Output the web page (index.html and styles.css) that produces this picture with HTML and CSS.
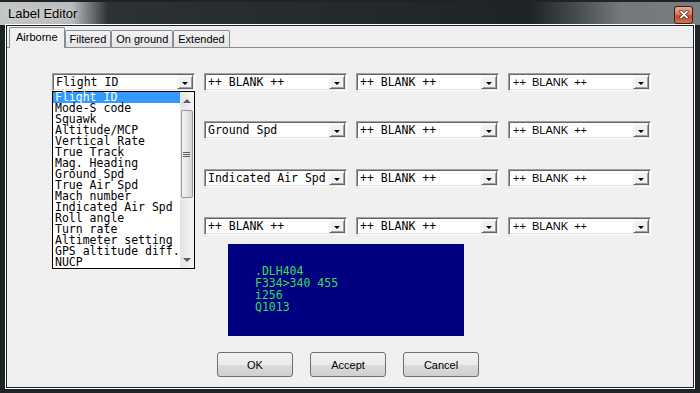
FILE: index.html
```html
<!DOCTYPE html>
<html lang="en">
<head>
    <meta charset="UTF-8">
    <title>Label Editor</title>
    <link rel="stylesheet" href="styles.css">
</head>
<body>
    <div class="window">
        <div class="titlebar">
            <span class="title">Label Editor</span>
            <span class="close-btn">
                <svg width="10" height="9" viewBox="0 0 10 9">
                    <path d="M2 1.5 L8 7.5 M8 1.5 L2 7.5" stroke="#5a1c10" stroke-width="3.2" stroke-linecap="round"/>
                    <path d="M2 1.5 L8 7.5 M8 1.5 L2 7.5" stroke="#fff" stroke-width="1.8" stroke-linecap="round"/>
                </svg>
            </span>
        </div>

        <div class="frame">
            <div class="client">
                <div class="tabs">
                    <div class="tab active">Airborne</div>
                    <div class="tab">Filtered</div>
                    <div class="tab">On ground</div>
                    <div class="tab">Extended</div>
                </div>

                <div class="panel">
                    <div class="grid">
                        <!-- row 1 -->
                        <div class="combo">
                            <span class="combo-value">Flight ID</span>
                            <span class="combo-btn"></span>
                            <div class="dropdown">
                                <div class="options">
                                    <div class="option selected">Flight ID</div>
                                    <div class="option">Mode-S code</div>
                                    <div class="option">Squawk</div>
                                    <div class="option">Altitude/MCP</div>
                                    <div class="option">Vertical Rate</div>
                                    <div class="option">True Track</div>
                                    <div class="option">Mag. Heading</div>
                                    <div class="option">Ground Spd</div>
                                    <div class="option">True Air Spd</div>
                                    <div class="option">Mach number</div>
                                    <div class="option">Indicated Air Spd</div>
                                    <div class="option">Roll angle</div>
                                    <div class="option">Turn rate</div>
                                    <div class="option">Altimeter setting</div>
                                    <div class="option">GPS altitude diff.</div>
                                    <div class="option">NUCP</div>
                                </div>
                                <div class="scrollbar">
                                    <div class="sb-arrow up"></div>
                                    <div class="sb-track">
                                        <div class="sb-thumb"><span class="sb-grip"></span></div>
                                    </div>
                                    <div class="sb-arrow down"></div>
                                </div>
                            </div>
                        </div>
                        <div class="combo"><span class="combo-value">++ BLANK ++</span><span class="combo-btn"></span></div>
                        <div class="combo"><span class="combo-value">++ BLANK ++</span><span class="combo-btn"></span></div>
                        <div class="combo"><span class="combo-value sans">++  BLANK  ++</span><span class="combo-btn"></span></div>

                        <!-- row 2 (first box sits under the open list) -->
                        <div class="combo"><span class="combo-value"></span><span class="combo-btn"></span></div>
                        <div class="combo"><span class="combo-value">Ground Spd</span><span class="combo-btn"></span></div>
                        <div class="combo"><span class="combo-value">++ BLANK ++</span><span class="combo-btn"></span></div>
                        <div class="combo"><span class="combo-value sans">++  BLANK  ++</span><span class="combo-btn"></span></div>

                        <!-- row 3 -->
                        <div class="combo"><span class="combo-value"></span><span class="combo-btn"></span></div>
                        <div class="combo"><span class="combo-value">Indicated Air Spd</span><span class="combo-btn"></span></div>
                        <div class="combo"><span class="combo-value">++ BLANK ++</span><span class="combo-btn"></span></div>
                        <div class="combo"><span class="combo-value sans">++  BLANK  ++</span><span class="combo-btn"></span></div>

                        <!-- row 4 -->
                        <div class="combo"><span class="combo-value"></span><span class="combo-btn"></span></div>
                        <div class="combo"><span class="combo-value">++ BLANK ++</span><span class="combo-btn"></span></div>
                        <div class="combo"><span class="combo-value">++ BLANK ++</span><span class="combo-btn"></span></div>
                        <div class="combo"><span class="combo-value sans">++  BLANK  ++</span><span class="combo-btn"></span></div>
                    </div>

                    <div class="preview">.DLH404
F334>340 455
i256
Q1013</div>

                    <div class="actions">
                        <button class="btn">OK</button>
                        <button class="btn">Accept</button>
                        <button class="btn">Cancel</button>
                    </div>
                </div>
            </div>
        </div>
    </div>
</body>
</html>
```

FILE: styles.css
```css
* {
    box-sizing: border-box;
}
body {
    margin: 0;
    width: 700px;
    height: 393px;
    overflow: hidden;
    font-family: "Liberation Sans", Arial, sans-serif;
    font-size: 11px;
    color: #000;
    background: #1e2326;
}
.window {
    height: 393px;
    display: flex;
    flex-direction: column;
    background: #1e2326;
}
.titlebar {
    flex: none;
    height: 25px;
    display: flex;
    align-items: center;
    justify-content: space-between;
    padding: 0 7px 0 8px;
    border-top: 2px solid #1e2326;
    background: linear-gradient(to right, #c3c5c6 0, #b9bbbc 72px, #2c3134 108px, #1e2326 530px, #4a4f52 580px, #74787a 620px, #7a7d7f 700px);
}
.title {
    font-size: 13px;
    color: #000;
    text-shadow: 0 0 5px #e4e4e4;
}
.close-btn {
    width: 19px;
    height: 18px;
    margin-top: 2px;
    display: flex;
    align-items: center;
    justify-content: center;
    border: 1px solid #3a1e17;
    border-radius: 3px;
    background: linear-gradient(#eaa996, #d77a62 45%, #c34a2f 55%, #d2714f);
}
.frame {
    flex: 1;
    display: flex;
    padding: 0 6px 5px 6px;
}
.client {
    flex: 1;
    display: flex;
    flex-direction: column;
    background: #f0f0f0;
    border: 1px solid #1e2326;
    box-shadow: 0 0 0 1px #fff;
}

/* tabs */
.tabs {
    flex: none;
    height: 21px;
    display: flex;
    align-items: flex-end;
    padding-left: 2px;
}
.tab {
    height: 17px;
    padding: 0 4px;
    line-height: 17px;
    border: 1px solid #898c95;
    border-bottom: none;
    border-radius: 2px 2px 0 0;
    background: linear-gradient(#f3f3f3, #e4e4e4);
}
.tab.active {
    position: relative;
    height: 21px;
    padding: 0 6px;
    line-height: 19px;
    margin-bottom: -1px;
    background: #f0f0f0;
}
.panel {
    flex: 1;
    border-top: 1px solid #898c95;
    padding-top: 25px;
}

/* combo boxes */
.grid {
    display: grid;
    grid-template-columns: repeat(4, 143px);
    grid-auto-rows: 18px;
    column-gap: 9px;
    row-gap: 30px;
    margin-left: 45px;
}
.combo {
    position: relative;
    display: flex;
    align-items: center;
    height: 18px;
    padding: 1px;
    background: #fff;
    border: 1px solid;
    border-color: #a0a0a0 #fff #fff #a0a0a0;
    box-shadow: inset 1px 1px 0 #696969, inset -1px -1px 0 #e3e3e3;
}
.combo-value {
    flex: 1;
    padding-left: 2px;
    font-family: "DejaVu Sans Mono", monospace;
    font-size: 11.5px;
    white-space: pre;
    overflow: hidden;
}
.combo-value.sans {
    font-family: "Liberation Sans", Arial, sans-serif;
    font-size: 11px;
    padding-left: 3px;
}
.combo-btn {
    width: 16px;
    height: 14px;
    display: flex;
    align-items: center;
    justify-content: center;
    padding-top: 3px;
    background: #f0f0f0;
    border: 1px solid;
    border-color: #f0f0f0 #696969 #696969 #f0f0f0;
    box-shadow: inset 1px 1px 0 #fff, inset -1px -1px 0 #a0a0a0;
}
.combo-btn::after {
    content: "";
    border-left: 3px solid transparent;
    border-right: 3px solid transparent;
    border-top: 3px solid #000;
}

/* open list */
.dropdown {
    position: absolute;
    top: 17px;
    left: -1px;
    z-index: 2;
    width: 143px;
    height: 178px;
    display: flex;
    background: #fff;
    border: 1px solid #000;
}
.options {
    flex: 1;
    font-family: "DejaVu Sans Mono", monospace;
    font-size: 11.5px;
    line-height: 11px;
}
.option {
    height: 11px;
    padding-left: 2px;
    white-space: nowrap;
}
.option.selected {
    background: #3399ff;
    color: #fff;
}
.scrollbar {
    width: 17px;
    display: flex;
    flex-direction: column;
    background: linear-gradient(to right, #e4e4e4, #f4f4f4);
}
.sb-arrow {
    height: 17px;
    display: flex;
    align-items: center;
    justify-content: center;
}
.sb-arrow.up::before {
    content: "";
    border-left: 4px solid transparent;
    border-right: 4px solid transparent;
    border-bottom: 4px solid #5c5c5c;
}
.sb-arrow.down::before {
    content: "";
    border-left: 4px solid transparent;
    border-right: 4px solid transparent;
    border-top: 4px solid #5c5c5c;
}
.sb-track {
    flex: 1;
    padding: 1px 1px 0 1px;
}
.sb-thumb {
    height: 88px;
    display: flex;
    align-items: center;
    justify-content: center;
    border: 1px solid #979797;
    border-radius: 2px;
    background: linear-gradient(to right, #f4f4f4, #e6e6e6 50%, #d4d4d4);
}
.sb-grip {
    width: 7px;
    height: 5px;
    background: repeating-linear-gradient(#606060 0 1px, transparent 1px 2px);
}

/* preview */
.preview {
    width: 236px;
    height: 92px;
    margin: 9px 0 0 221px;
    padding: 21px 0 0 27px;
    background: #000080;
    color: #33dd55;
    font-family: "DejaVu Sans Mono", monospace;
    font-size: 11.5px;
    line-height: 12px;
    white-space: pre;
}

/* buttons */
.actions {
    display: flex;
    justify-content: center;
    gap: 17px;
    margin-top: 16px;
    padding-right: 4px;
}
.btn {
    width: 76px;
    height: 25px;
    font-family: "Liberation Sans", Arial, sans-serif;
    font-size: 11px;
    color: #000;
    border: 1px solid #707070;
    border-radius: 3px;
    background: linear-gradient(#f2f2f2 0%, #ebebeb 50%, #dddddd 50%, #cfcfcf 100%);
}
```
